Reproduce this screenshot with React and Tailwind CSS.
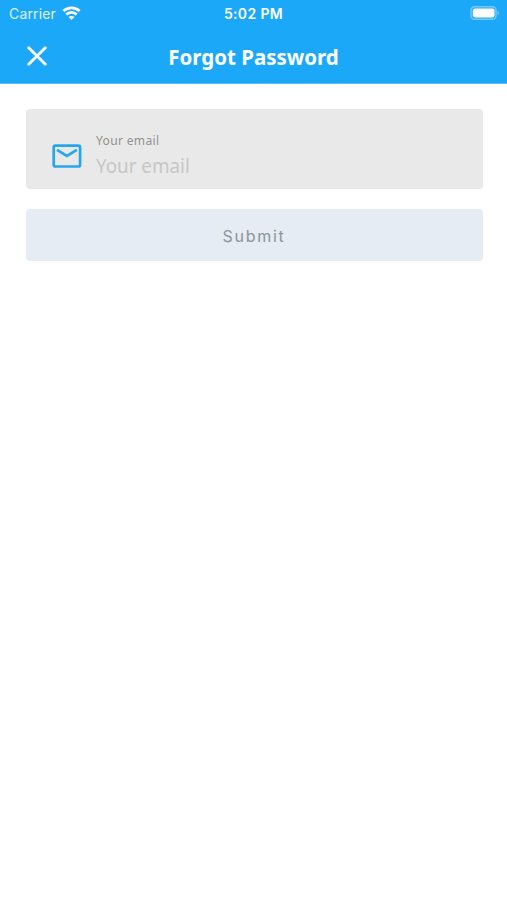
function StatusBar() {
  return (
    <div className="grid h-7 grid-cols-3 items-center pl-[9px] pr-[7px] font-['Inter',sans-serif] text-white">
      <div className="flex items-center gap-[6px]">
        <span className="text-[14px] leading-none tracking-[0.15px] text-white/85">Carrier</span>
        <svg width="19" height="14" viewBox="0 0 18 14" fill="none" stroke="white" strokeWidth="2.8" className="-mt-[2px]">
          <path d="M0.9 5C5.4 0.8 12.6 0.8 17.1 5" />
          <path d="M3.8 8.6C6.8 5.7 11.2 5.7 14.2 8.6" />
          <path d="M9 14L6 11C7.8 9.6 10.2 9.6 12 11Z" fill="white" stroke="none" />
        </svg>
      </div>
      <span className="-ml-[2px] text-center text-[14px] font-semibold leading-none tracking-[0.35px]">5:02 PM</span>
      <svg width="30" height="14" viewBox="0 0 30 14" className="justify-self-end -mt-[2px]">
        <rect x="1" y="0.8" width="25" height="12.4" rx="3.5" fill="none" stroke="white" strokeOpacity="0.4" strokeWidth="1.4" />
        <rect x="2.8" y="2.5" width="21.7" height="9" rx="2" fill="white" />
        <path d="M27.5 5C29.4 5.5 29.4 8.5 27.5 9Z" fill="white" fillOpacity="0.4" />
      </svg>
    </div>
  );
}

export default function App() {
  return (
    <div className="min-h-[900px] w-full bg-white font-['Noto_Sans',sans-serif]">
      <header className="h-[84px] border-b border-[#58bdf5] bg-[#1ca8f9]">
        <StatusBar />
        <div className="grid h-14 grid-cols-[60px_1fr_60px] items-center">
          <button aria-label="Close" className="ml-[27px] w-5">
            <svg width="20" height="20" viewBox="0 0 20 20" stroke="white" strokeWidth="2.8" strokeLinecap="round">
              <path d="M1.7 1.7L18.3 18.3M18.3 1.7L1.7 18.3" />
            </svg>
          </button>
          <h1 className="origin-center scale-x-[0.93] whitespace-nowrap text-center text-[22px] font-bold leading-none text-white">
            Forgot Password
          </h1>
        </div>
      </header>
      <main className="flex flex-col gap-5 pl-[25.5px] pr-[24.5px] pt-[25px]">
        <label className="flex h-20 items-start rounded-[4px] bg-[#e9e9e9] pl-[26.5px]">
          <svg width="30" height="24" viewBox="0 0 30 24" fill="none" stroke="#26a7eb" strokeWidth="2.7" className="mt-[35px]">
            <rect x="1.7" y="1.7" width="26.4" height="20.8" rx="1.8" />
            <path d="M5 5.8L14.9 12L24.8 5.8" />
          </svg>
          <span className="flex flex-col pl-[14px] pt-[24px]">
            <span className="text-[12px] leading-4 tracking-[0.35px] text-[#929292]">Your email</span>
            <span className="mt-[3px] origin-left scale-x-[0.94] text-[20px] leading-7 text-[#c6c6c6]">Your email</span>
          </span>
        </label>
        <button className="h-[52px] rounded-[4px] bg-[#e5ecf3] pt-[2px] font-['Inter',sans-serif] text-[16px] tracking-[1.75px] text-[#8d9498]">
          Submit
        </button>
      </main>
    </div>
  );
}
